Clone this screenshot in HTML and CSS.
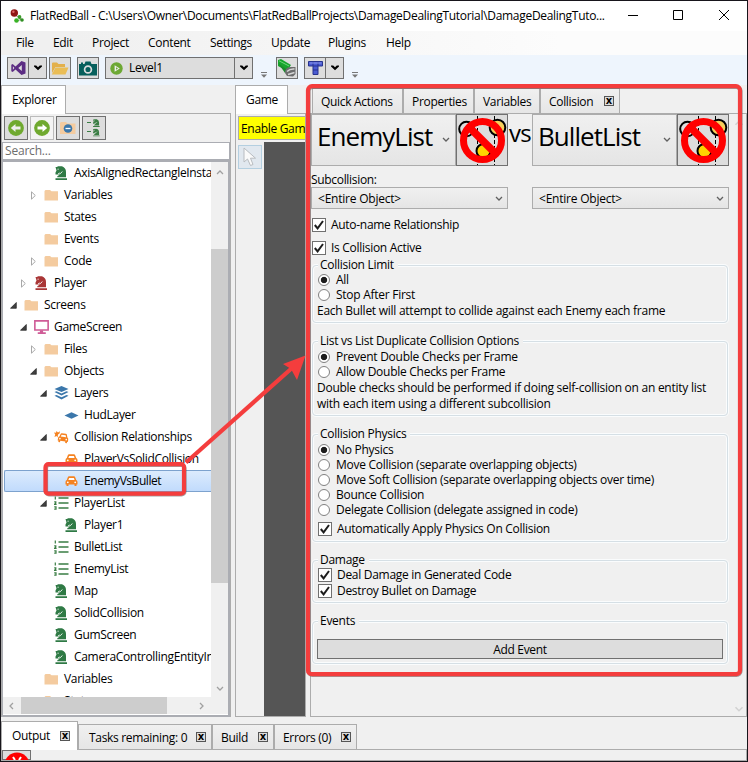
FILE: index.html
```html
<!DOCTYPE html>
<html lang="en">
<head>
<meta charset="utf-8">
<title>FlatRedBall</title>
<link rel="stylesheet" href="styles.css">
</head>
<body>
<svg class="defs" width="0" height="0" aria-hidden="true">
  <symbol id="folder" viewBox="0 0 14 12"><path d="M0 2L1 1H5.500L7 2.200H13.500V11.500H0Z" fill="#f4cb9f"/></symbol>
  <symbol id="knight" viewBox="0 0 12 14"><path d="M0 1H1.500L2.500 .3H6.500Q10.500 1.800 10.500 6V11.300H1.800V10.300L5 8L3.500 8.500H0V6.500L1 4.500Z M0 12.200H11.500V14H0Z" fill="currentColor"/><path d="M2 3.200H3.200M2.500 8L3.800 7.200L5 7.500L6.800 5.500" fill="none" stroke="#fff" stroke-width=".9"/></symbol>
  <symbol id="screen" viewBox="0 0 14 13"><path d="M.8 .8H13.200V9.300H.8Z" fill="none" stroke="#cf5c97" stroke-width="1.500"/><path d="M5.500 9.500H8.500V11.500H11V13H3.500V11.500H5.500Z" fill="#cf5c97"/></symbol>
  <symbol id="layers" viewBox="0 0 14 14"><path d="M7 0L14 3L7 6L0 3Z" fill="#3b77ab"/><path d="M0 6L2 5.200L7 7.400L12 5.200L14 6L7 9.600ZM0 9.800L2 9L7 11.200L12 9L14 9.800L7 13.500Z" fill="#3b77ab"/></symbol>
  <symbol id="layer" viewBox="0 0 14 7"><path d="M7 .2L14 3.500L7 6.800L0 3.500Z" fill="#3b77ab"/></symbol>
  <symbol id="car" viewBox="0 0 12 11"><path d="M2.300 1.200Q2.600 .3 3.600 .3H8.400Q9.400 .3 9.700 1.200L10.700 4Q12 4.500 12 6V8.500H11V10H9V8.500H3V10H1V8.500H0V6Q0 4.500 1.300 4Z" fill="#f58220"/><path d="M3.600 1.900H8.400L9.100 4H2.900Z" fill="#fff"/><circle cx="2.300" cy="6.300" r=".9" fill="#fff"/><circle cx="9.700" cy="6.300" r=".9" fill="#fff"/></symbol>
  <symbol id="crash" viewBox="0 0 15 13"><path d="M0 2L2 2.200L2.500 .5L4 2L6 .8L5.500 3L4 4L3.500 7L2.500 5.500L.5 6.500L1.200 4Z" fill="#f58220"/><g transform="translate(4.800 2) rotate(8) scale(.86 .95)"><path d="M2.300 1.200Q2.600 .3 3.600 .3H8.400Q9.400 .3 9.700 1.200L10.700 4Q12 4.500 12 6V8.500H11V10H9V8.500H3V10H1V8.500H0V6Q0 4.500 1.300 4Z" fill="#f58220"/><path d="M3.600 1.900H8.400L9.100 4H2.900Z" fill="#fff"/><circle cx="2.300" cy="6.300" r=".9" fill="#fff"/><circle cx="9.700" cy="6.300" r=".9" fill="#fff"/></g></symbol>
  <symbol id="list" viewBox="0 0 15 13"><path d="M4.500 1.500H14.500M4.500 6.500H14.500M4.500 11.500H14.500" stroke="#3a7d44" stroke-width="1.500"/><path d="M1.300 0V3M.2 5.300H1.800V6.500L.6 7.800H2.600M.2 10.300H2V12.600H.2" stroke="#3a7d44" stroke-width="1.200" fill="none"/></symbol>
  <symbol id="closed" viewBox="0 0 7 9"><path d="M1.500 .8L5.300 4.500L1.500 8.200Z" fill="#fff" stroke="#a8a8a8"/></symbol>
  <symbol id="open" viewBox="0 0 7 7"><path d="M6.300 .5V6.300H.5Z" fill="#404040" stroke="#222" stroke-width=".7"/></symbol>
  <symbol id="down" viewBox="0 0 8 6"><path d="M0 .5H2.200L4 2.300L5.800 .5H8V1.500L4 5.200L0 1.500Z" fill="#000"/></symbol>
  <symbol id="chev" viewBox="0 0 8 6"><path d="M1 1L4 4L7 1" fill="none" stroke="currentColor" stroke-width="1.300"/></symbol>
  <symbol id="overflow" viewBox="0 0 6 6"><path d="M0 .5H6" stroke="#777"/><path d="M0 2.500H6L3 5.700Z" fill="#777"/></symbol>
  <symbol id="check" viewBox="0 0 10 10"><path d="M.8 5L3.600 8.400L9 1" fill="none" stroke="#1d1d1d" stroke-width="2"/></symbol>
  <symbol id="forbid" viewBox="0 0 50 50">
    <path d="M20.500 1V50M37.500 1V50" stroke="#000" stroke-dasharray="4 2"/>
    <circle cx="9.500" cy="14" r="7.300" fill="none" stroke="#000" stroke-width="2"/>
    <circle cx="40.500" cy="12.500" r="7.800" fill="#f6cf5b" stroke="#000" stroke-width="2"/>
    <circle cx="26.500" cy="36" r="7" fill="#ffd400" stroke="#000" stroke-width="2"/>
    <circle cx="25.500" cy="25.500" r="19" fill="none" stroke="#f00" stroke-width="7"/>
    <path d="M12 12L39 39" stroke="#f00" stroke-width="7.500"/>
  </symbol>
</svg>

<div class="window">
  <header class="titlebar">
    <svg class="logo" width="14" height="15" viewBox="0 0 14 15"><path d="M4 5L12 11M7 12L12 10" stroke="#999"/><circle cx="4.300" cy="4" r="3.700" fill="#8f1515"/><circle cx="3.400" cy="2.800" r="1.200" fill="#d66"/><circle cx="9.500" cy="8" r="1.900" fill="#3a9b28"/><circle cx="6.500" cy="11.500" r="2.300" fill="#39b326"/><circle cx="12" cy="11" r="1.800" fill="#2f8f22"/></svg>
    <span class="title">FlatRedBall - C:\Users\Owner\Documents\FlatRedBallProjects\DamageDealingTutorial\DamageDealingTuto...</span>
    <svg class="winbtns" width="102" height="12" viewBox="0 0 102 12"><path d="M0 6.500H10M45.500 1.500H54.500V10.500H45.500ZM91 1L101 11M101 1L91 11" fill="none" stroke="#000"/></svg>
  </header>

  <nav class="menu">
    <span class="m1">File</span><span class="m2">Edit</span><span class="m3">Project</span><span class="m4">Content</span><span class="m5">Settings</span><span class="m6">Update</span><span class="m7">Plugins</span><span class="m8">Help</span>
  </nav>

  <div class="toolbar">
    <div class="tb split"><span class="w21"><svg width="15" height="14" viewBox="0 0 15 14"><path d="M10.500 0L14.500 1.500V12.500L10.500 14L4.500 8.500L1.700 11L.3 10.300V3.700L1.700 3L4.500 5.500ZM10.800 4L7.300 7L10.800 10ZM1.900 5.300V8.700L3.400 7Z" fill="#5c2d83" fill-rule="evenodd"/></svg></span><span class="w18"><svg width="8" height="6"><use href="#down"/></svg></span></div>
    <div class="tb b2"><svg width="18" height="13" viewBox="0 0 18 13"><path d="M1 11V1.500Q1 .5 2 .5H6L7.500 2H14V5H4.500Z" fill="#e3b04b"/><path d="M4.500 5.500H17.500L14.500 12.500H.8Z" fill="#eabd55"/></svg></div>
    <div class="tb b3"><svg width="18" height="15" viewBox="0 0 18 15"><path d="M0 3H2V1.500H4V3H5.500L6.500 .5H11.500L12.500 3H18V14.500H0Z" fill="#075f5c"/><circle cx="9" cy="8.500" r="3.400" fill="none" stroke="#ddd" stroke-width="1.700"/></svg></div>
    <div class="tb split b4"><span class="level"><svg width="13" height="13" viewBox="0 0 13 13"><circle cx="6.500" cy="6.500" r="6.200" fill="#6da834"/><path d="M4.600 3.300L9.800 6.500L4.600 9.700Z" fill="#eee"/><path d="M6 5.200L8 6.500L6 7.800Z" fill="#6da834"/></svg><i>Level1</i></span><span class="w18"><svg width="8" height="6"><use href="#down"/></svg></span></div>
    <svg class="ov" width="6" height="6"><use href="#overflow"/></svg>
    <div class="tb b5"><svg width="20" height="20" viewBox="0 0 20 20"><path d="M1 2L4 1L14 7L10 13L1 8Z" fill="#17a52d"/><path d="M2 2.800L12 8" stroke="#6fd67a"/><path d="M1 5L8 15L10 12Z" fill="#1c8a2c"/><path d="M8 15Q8 9.500 13 9H18.500V16L16 18.500L10 18Z" fill="#6c6c6c"/><path d="M10 13.500Q13 10.500 17.500 11M11 16.500L17.500 14.500" fill="none" stroke="#d5d5d5" stroke-width="1.500"/></svg></div>
    <div class="tb split b6"><span class="w21"><svg width="15" height="14" viewBox="0 0 15 14"><path d="M.5 .5H14.500V5H10V13.500H5V5H.5Z" fill="#4a5bd2" stroke="#27338f"/><path d="M5 1V5H10V1M5 9H10" fill="none" stroke="#27338f"/><path d="M1.500 2H13.500" stroke="#8c98ee"/></svg></span><span class="w18"><svg width="8" height="6"><use href="#down"/></svg></span></div>
    <svg class="ov" width="6" height="6"><use href="#overflow"/></svg>
  </div>

  <main class="docks">
    <section class="dock explorer">
      <div class="tabs"><span class="tab active">Explorer</span></div>
      <div class="pane">
        <div class="tools">
          <b><svg width="16" height="16" viewBox="0 0 16 16"><circle cx="8" cy="8" r="7.900" fill="#6fa92f"/><path d="M2.800 8L7.500 4V6.500H12.500V9.500H7.500V12Z" fill="#eee"/></svg></b>
          <b class="lit"><svg width="16" height="16" viewBox="0 0 16 16"><circle cx="8" cy="8" r="7.900" fill="#6fa92f"/><path d="M13.200 8L8.500 4V6.500H3.500V9.500H8.500V12Z" fill="#fff"/></svg></b>
          <b><svg width="16" height="14" viewBox="0 0 16 14"><path d="M0 2L1 1H6L7.500 2.500H15.500V13H0Z" fill="#f4cb9f"/><circle cx="8" cy="7.500" r="4.300" fill="#3b77ab"/><path d="M5.500 7.500H10.500" stroke="#fff" stroke-width="1.300"/></svg></b>
          <b><svg width="14" height="18" viewBox="0 0 14 18"><path d="M0 3.500H4M0 12.500H4" stroke="#3a7d44"/><g color="#3a7d44"><use href="#knight" x="6" y="0" width="7" height="8"/><use href="#knight" x="6" y="9.500" width="7" height="8"/></g></svg></b>
        </div>
        <div class="search">Search...</div>
        <div class="treebox">
          <div class="tree">
            <div class="row l3"><svg class="tw"></svg><svg class="ic green"><use href="#knight"/></svg><span>AxisAlignedRectangleInstance</span></div>
            <div class="row l2"><svg class="tw"><use href="#closed"/></svg><svg class="ic fo"><use href="#folder"/></svg><span>Variables</span></div>
            <div class="row l2"><svg class="tw"></svg><svg class="ic fo"><use href="#folder"/></svg><span>States</span></div>
            <div class="row l2"><svg class="tw"></svg><svg class="ic fo"><use href="#folder"/></svg><span>Events</span></div>
            <div class="row l2"><svg class="tw"><use href="#closed"/></svg><svg class="ic fo"><use href="#folder"/></svg><span>Code</span></div>
            <div class="row l1"><svg class="tw"><use href="#closed"/></svg><svg class="ic red"><use href="#knight"/></svg><span>Player</span></div>
            <div class="row l0"><svg class="tw op"><use href="#open"/></svg><svg class="ic fo"><use href="#folder"/></svg><span>Screens</span></div>
            <div class="row l1"><svg class="tw op"><use href="#open"/></svg><svg class="ic"><use href="#screen"/></svg><span>GameScreen</span></div>
            <div class="row l2"><svg class="tw"><use href="#closed"/></svg><svg class="ic fo"><use href="#folder"/></svg><span>Files</span></div>
            <div class="row l2"><svg class="tw op"><use href="#open"/></svg><svg class="ic fo"><use href="#folder"/></svg><span>Objects</span></div>
            <div class="row l3"><svg class="tw op"><use href="#open"/></svg><svg class="ic"><use href="#layers"/></svg><span>Layers</span></div>
            <div class="row l4"><svg class="tw"></svg><svg class="ic flat"><use href="#layer"/></svg><span>HudLayer</span></div>
            <div class="row l3"><svg class="tw op"><use href="#open"/></svg><svg class="ic"><use href="#crash"/></svg><span>Collision Relationships</span></div>
            <div class="row l4"><svg class="tw"></svg><svg class="ic car"><use href="#car"/></svg><span>PlayerVsSolidCollision</span></div>
            <div class="row l4 sel"><svg class="tw"></svg><svg class="ic car"><use href="#car"/></svg><span>EnemyVsBullet</span></div>
            <div class="row l3"><svg class="tw op"><use href="#open"/></svg><svg class="ic"><use href="#list"/></svg><span>PlayerList</span></div>
            <div class="row l4"><svg class="tw"></svg><svg class="ic green"><use href="#knight"/></svg><span>Player1</span></div>
            <div class="row l3"><svg class="tw"></svg><svg class="ic"><use href="#list"/></svg><span>BulletList</span></div>
            <div class="row l3"><svg class="tw"></svg><svg class="ic"><use href="#list"/></svg><span>EnemyList</span></div>
            <div class="row l3"><svg class="tw"></svg><svg class="ic green"><use href="#knight"/></svg><span>Map</span></div>
            <div class="row l3"><svg class="tw"></svg><svg class="ic green"><use href="#knight"/></svg><span>SolidCollision</span></div>
            <div class="row l3"><svg class="tw"></svg><svg class="ic green"><use href="#knight"/></svg><span>GumScreen</span></div>
            <div class="row l3"><svg class="tw"></svg><svg class="ic green"><use href="#knight"/></svg><span>CameraControllingEntityInstance</span></div>
            <div class="row l2"><svg class="tw"></svg><svg class="ic fo"><use href="#folder"/></svg><span>Variables</span></div>
            <div class="row l2"><svg class="tw"></svg><svg class="ic fo"><use href="#folder"/></svg><span>States</span></div>
          </div>
          <div class="vbar"><svg class="up" width="8" height="6"><use href="#chev"/></svg><div class="vthumb"></div><svg width="8" height="6"><use href="#chev"/></svg></div>
          <div class="hbar"><svg class="lf" width="8" height="6"><use href="#chev"/></svg><div class="hthumb"></div><svg class="rt" width="8" height="6"><use href="#chev"/></svg></div>
        </div>
      </div>
    </section>

    <section class="dock game">
      <div class="tabs"><span class="tab active">Game</span></div>
      <div class="pane">
        <div class="enable">Enable Game</div>
        <div class="stage"><b class="cursor"><svg width="14" height="20" viewBox="0 0 14 20"><path d="M1 1V15L4.500 12L7.500 18.500L10 17.500L7.500 11.200H12.500Z" fill="#fafafa" stroke="#b8bcc0"/></svg></b><div class="dark"></div></div>
      </div>
    </section>

    <section class="dock props">
      <div class="tabs"><span class="tab t1">Quick Actions</span><span class="tab t2">Properties</span><span class="tab t3">Variables</span><span class="tab t4">Collision<em>x</em></span></div>
      <div class="pane">
        <div class="form">
          <div class="versus">
            <div class="combo big"><span>EnemyList</span><svg width="8" height="6"><use href="#chev"/></svg></div><div class="stop"><svg width="50" height="50"><use href="#forbid"/></svg></div>
            <span class="vs">vs</span>
            <div class="combo big"><span>BulletList</span><svg width="8" height="6"><use href="#chev"/></svg></div><div class="stop"><svg width="50" height="50"><use href="#forbid"/></svg></div>
          </div>
          <div class="sublabel">Subcollision:</div>
          <div class="subs"><div class="combo"><span>&lt;Entire Object&gt;</span><svg width="8" height="6"><use href="#chev"/></svg></div><div class="combo"><span>&lt;Entire Object&gt;</span><svg width="8" height="6"><use href="#chev"/></svg></div></div>
          <div class="chk c1"><u><svg width="10" height="10"><use href="#check"/></svg></u><span>Auto-name Relationship</span></div>
          <div class="chk c2"><u><svg width="10" height="10"><use href="#check"/></svg></u><span>Is Collision Active</span></div>

          <div class="group g1"><div class="legend">Collision Limit</div>
            <div class="rad on"><u></u><span>All</span></div>
            <div class="rad"><u></u><span>Stop After First</span></div>
            <p>Each Bullet will attempt to collide against each Enemy each frame</p>
          </div>
          <div class="group g2"><div class="legend">List vs List Duplicate Collision Options</div>
            <div class="rad on"><u></u><span>Prevent Double Checks per Frame</span></div>
            <div class="rad"><u></u><span>Allow Double Checks per Frame</span></div>
            <p>Double checks should be performed if doing self-collision on an entity list<br>with each item using a different subcollision</p>
          </div>
          <div class="group g3"><div class="legend">Collision Physics</div>
            <div class="rad on"><u></u><span>No Physics</span></div>
            <div class="rad"><u></u><span>Move Collision (separate overlapping objects)</span></div>
            <div class="rad"><u></u><span>Move Soft Collision (separate overlapping objects over time)</span></div>
            <div class="rad"><u></u><span>Bounce Collision</span></div>
            <div class="rad"><u></u><span>Delegate Collision (delegate assigned in code)</span></div>
            <div class="chk"><u><svg width="10" height="10"><use href="#check"/></svg></u><span>Automatically Apply Physics On Collision</span></div>
          </div>
          <div class="group g4"><div class="legend">Damage</div>
            <div class="chk"><u><svg width="10" height="10"><use href="#check"/></svg></u><span>Deal Damage in Generated Code</span></div>
            <div class="chk"><u><svg width="10" height="10"><use href="#check"/></svg></u><span>Destroy Bullet on Damage</span></div>
          </div>
          <div class="group g5"><div class="legend">Events</div><div class="addbtn">Add Event</div></div>
        </div>
        <div class="ghost"><svg class="up" width="10" height="7" viewBox="0 0 8 6"><use href="#chev"/></svg><svg width="10" height="7" viewBox="0 0 8 6"><use href="#chev"/></svg></div>
      </div>
    </section>
  </main>

  <footer class="bottom">
    <div class="tabs"><span class="tab active o1">Output<em>x</em></span><span class="tab o3">Tasks remaining: 0<em>x</em></span><span class="tab o4">Build<em>x</em></span><span class="tab o5">Errors (0)<em>x</em></span></div>
    <div class="out"><div class="outbtn"><svg width="26" height="9" viewBox="0 0 26 9"><circle cx="13" cy="14" r="12.500" fill="#f00"/><path d="M9 6L11 9M17 6L15 9" stroke="#fff" stroke-width="2"/></svg></div></div>
  </footer>

  <svg class="marks" width="748" height="762" viewBox="0 0 748 762">
    <g class="shade"><rect x="308.500" y="87" width="432" height="588" rx="4"/><rect x="46" y="465" width="138.500" height="29.500" rx="3"/></g>
    <g class="ink"><rect x="308" y="86.200" width="432" height="588" rx="4"/><rect x="45.500" y="464.200" width="138.500" height="29.500" rx="3"/><path d="M186 462.500L292 368"/></g>
    <path d="M305.500 355.500L283 364L291 369L297 380Z" fill="#f43d3d"/>
  </svg>
</div>
</body>
</html>
```
FILE: styles.css
```css
* { box-sizing: border-box; }
body { margin: 0; width: 748px; height: 762px; overflow: hidden; background: #17151b; font: 12px/16px "Open Sans", "Noto Sans", sans-serif; letter-spacing: -0.32px; color: #000; }
.defs { position: absolute; }
svg { display: block; flex: none; }
i, em, b, u { font-style: normal; font-weight: normal; text-decoration: none; }
.window { position: relative; width: 748px; height: 762px; padding-top: 1px; display: flex; flex-direction: column; background: #f0f0f0; border: solid #17151b; border-width: 0 1px 1px 1px; box-shadow: inset 0 1px #17151b; white-space: nowrap; }
.window > * { flex: none; }

.titlebar { height: 30px; padding-left: 9px; display: flex; align-items: center; background: #fff; }
.logo { margin-right: 6px; }
.title { width: 598px; line-height: 30px; letter-spacing: -0.3px; }
.winbtns { margin-top: -2px; }
.menu { height: 24px; display: flex; background: linear-gradient(90deg, #f0f0f0 10%, #fcfcfc 75%); line-height: 24px; }
.menu span { flex: none; }
.m1 { width: 37px; margin-left: 15px; } .m2 { width: 39px; } .m3 { width: 56px; } .m4 { width: 62px; } .m5 { width: 61px; } .m6 { width: 57px; } .m7 { width: 58px; }
.toolbar { height: 30px; padding: 2px 0 0 6px; display: flex; background: #eef5fd; }
.tb { height: 22px; border: 1px solid #707070; background: #ddd; display: flex; align-items: center; justify-content: center; }
.split > span { height: 20px; display: flex; align-items: center; justify-content: center; }
.split > span + span { border-left: 1px solid #707070; }
.w21 { width: 20px; } .w18 { width: 18px; }
.b2 { width: 22px; margin-left: 2px; } .b3 { width: 22px; margin-left: 6px; } .b4 { margin-left: 6px; }
.split > .level { width: 128px; justify-content: flex-start; padding-left: 4px; gap: 6px; }
.ov { margin: 15px 0 0 8px; } .b5 { width: 22px; margin-left: 9px; } .b6 { margin-left: 6px; }

.docks { height: 632px; display: flex; }
.dock { display: flex; flex-direction: column; }
.tabs { display: flex; align-items: flex-end; height: 28px; flex: none; }
.tab { height: 25px; border: 1px solid #acacac; border-bottom: 0; background: linear-gradient(#f0f0f0, #e6e6e6); padding: 0 8px; line-height: 25px; display: flex; align-items: center; justify-content: space-between; }
.tab em { width: 10px; height: 10px; border: 1px solid #555; font: bold 10px/7px "DejaVu Sans", sans-serif; text-align: center; letter-spacing: 0; color: #000; background: #ddd; }
.tab.active { height: 29px; background: #fff; line-height: 28px; position: relative; margin-bottom: -1px; }
.pane { flex: 1; min-height: 0; border: 1px solid #acacac; }
.explorer { width: 230px; }
.explorer .tab { width: 65px; padding-left: 10px; }
.explorer .pane { border-width: 1px 1px 0 1px; display: flex; flex-direction: column; }
.tools { display: flex; gap: 2px; padding: 2px 0 0 2px; height: 28px; }
.tools b { width: 24px; height: 24px; border: 1px solid #707070; background: #ddd; display: flex; align-items: center; justify-content: center; }
.tools .lit { border-color: #bbb; background: #f4f4f4; }
.search { height: 18px; padding-left: 2px; border: 1px solid #abadb3; background: #fff; color: #6d6d6d; line-height: 16px; letter-spacing: -.2px; }
.treebox { flex: 1; border: 2px solid #abadb3; border-left-width: 1px; background: #fff; display: grid; grid-template: 535px 17px / 208px 17px; }
.tree { overflow: hidden; }
.row { display: flex; align-items: center; height: 22px; padding-left: 6px; border: 1px solid transparent; border-width: 1px 0; margin-left: 1px; }
.tw { width: 7px; height: 9px; margin-right: 7px; } .tw.op { height: 7px; }
.ic { width: 15px; height: 14px; margin-right: 5px; }
.fo { height: 12px; margin-top: -1px; } .flat { height: 7px; } .car { height: 11px; }
.green { color: #2f7a45; } .red { color: #a93636; }
.l1 { padding-left: 16px; } .l2 { padding-left: 26px; } .l3 { padding-left: 36px; } .l4 { padding-left: 46px; }
.sel { border: 1px solid #7da2ce; border-right: 0; padding-left: 45px; background: linear-gradient(#dcebfd, #c1dbfc); border-radius: 2px 0 0 2px; letter-spacing: -.45px; }
.vbar, .hbar { background: #f0f0f0; display: flex; align-items: center; color: #a0a0a0; }
.vbar { flex-direction: column; padding: 7px 0 5px; }
.vthumb { width: 17px; height: 334px; margin: 74px 0 auto; background: #cdcdcd; }
.hbar { grid-column: 1 / 3; padding: 0 22px 0 4px; }
.hthumb { width: 146px; height: 17px; margin: 0 auto 0 6px; background: #cdcdcd; }
.up { transform: scaleY(-1); } .lf { transform: rotate(90deg); } .rt { transform: rotate(-90deg); }

.game { width: 71px; margin-left: 4px; }
.game .tab { width: 53px; padding-left: 10px; }
.game .pane { display: flex; flex-direction: column; padding: 2px 0 0 2px; }
.enable { height: 24px; border: 1px solid #aaa; border-right: 0; background: #ff0; padding-left: 2px; line-height: 24px; overflow: hidden; }
.stage { flex: 1; display: flex; padding-top: 2px; }
.cursor { width: 24px; height: 24px; margin-top: 3px; border: 1px solid #b4cfe0; background: #e1e8ef; display: flex; align-items: center; justify-content: center; }
.dark { flex: 1; margin-left: 2px; background: #555; }

.props { width: 437px; margin-left: 4px; }
.t1 { width: 91px; margin-left: 2px; } .t2 { width: 71px; } .t3 { width: 66px; } .t4 { width: 80px; }
.t4 em { margin-right: -3px; }
.props .pane { display: flex; justify-content: space-between; }
.form { width: 418px; display: flex; flex-direction: column; }
.combo { width: 197px; height: 22px; border: 1px solid #acacac; background: linear-gradient(#f0f0f0, #e5e5e5); display: flex; align-items: center; justify-content: space-between; padding: 1px 4px 0 6px; color: #606060; letter-spacing: -.22px; }
.combo span { color: #000; }
.versus { display: flex; height: 52px; }
.big { width: 145px; height: 52px; font-size: 26px; letter-spacing: -.95px; line-height: 43px; align-items: flex-start; padding: 0 5px; }
.big svg { margin-top: 22px; }
.stop { width: 52px; height: 52px; border: 1px solid #707070; background: #ddd; }
.vs { width: 24px; font-size: 24px; line-height: 38px; letter-spacing: -.6px; text-align: center; }
.sublabel { height: 21px; padding-top: 6px; }
.subs { display: flex; gap: 24px; }
.chk, .rad { display: flex; align-items: center; height: 16px; letter-spacing: -.29px; }
.chk u { width: 14px; height: 14px; border: 1px solid #707070; background: #fff; display: flex; align-items: center; justify-content: center; margin-right: 5px; }
.rad { height: 15px; letter-spacing: -.27px; }
.rad u { width: 12px; height: 12px; border: 1px solid #808080; border-radius: 50%; background: #fff; margin-right: 6px; }
.rad.on u { background: radial-gradient(circle, #1c1c1c 2.800px, #fff 3.600px); }
.c1 { margin: 8px 0 0 1px; } .c2 { margin: 7px 0 0 1px; }
.group { margin-left: 1px; width: 416px; border: 1px solid #d5dfe5; border-radius: 4px; padding-left: 5px; box-shadow: inset 0 0 0 1px #fafcfd, 0 0 0 1px #fafcfd; }
.legend { width: max-content; height: 15px; line-height: 16px; margin: -9px 0 0 0; padding: 0 4px 0 2px; background: #f0f0f0; letter-spacing: -.28px; }
.group p { margin: 1px 0 0 -1px; letter-spacing: -.26px; }
.g1 { height: 58px; margin-top: 9px; } .g2 { height: 75px; margin-top: 18px; } .g3 { height: 108px; margin-top: 18px; } .g4 { height: 43px; margin-top: 18px; } .g5 { height: 43px; margin-top: 18px; }
.g2 .legend, .g3 .legend { margin-bottom: 1px; }
.g3 .chk { margin-top: 4px; }
.addbtn { height: 20px; margin: 11px 4px 0 -1px; border: 1px solid #707070; background: #ddd; line-height: 19px; text-align: center; }
.ghost { display: flex; flex-direction: column; justify-content: space-between; padding: 5px 2px 3px 0; color: #d2d2d2; }

.bottom { height: 44px; padding-top: 4px; }
.bottom .tab { padding: 0 5px 0 8px; }
.bottom .o1 { width: 77px; padding: 0 7px 0 10px; } .bottom .o3 { width: 134px; padding-left: 10px; } .o4 { width: 62px; } .o5 { width: 83px; }
.out { height: 12px; border: 1px solid #acacac; }
.outbtn { width: 29px; height: 10px; border: 1px solid #707070; background: #ddd; padding-left: 1px; }

.marks { position: absolute; left: -1px; top: 0; }
.ink { fill: none; stroke: #f43d3d; stroke-width: 4.200; }
.shade { fill: none; stroke: #555; stroke-opacity: .55; stroke-width: 4.200; }
```
